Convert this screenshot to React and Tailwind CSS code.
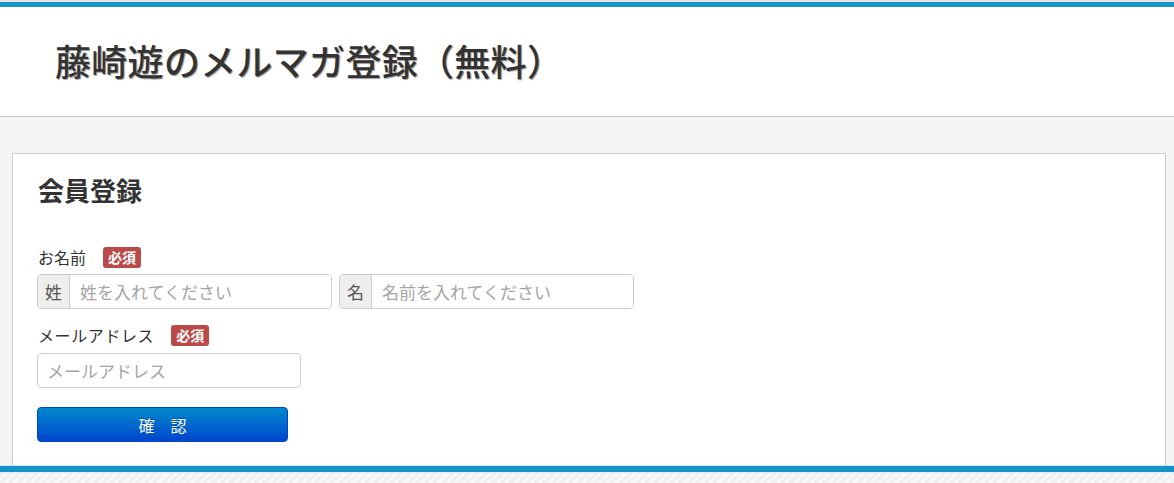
import React from "react";

const jp = { fontFamily: '"Noto Sans CJK JP", "Noto Sans", sans-serif' };

function Badge() {
  return (
    <span className="ml-[17px] inline-flex h-[21px] w-[38px] items-center justify-center rounded-[3px] bg-[#b94a48] text-[14px] font-bold leading-none text-white">
      必須
    </span>
  );
}

function AddonInput({ addon, placeholder }) {
  return (
    <div className="flex h-[35px] w-[295px] overflow-hidden rounded-[4px] border border-[#cccccc] bg-white">
      <div className="flex w-[32px] shrink-0 items-center justify-center border-r border-[#cccccc] bg-[#eeeeee] text-[17px] text-[#555]">
        {addon}
      </div>
      <input
        className="min-w-0 flex-1 bg-white pl-[10px] text-[17px] font-normal text-[#555] outline-none placeholder:text-[#a5a5a5]"
        style={jp}
        placeholder={placeholder}
      />
    </div>
  );
}

export default function App() {
  return (
    <div className="flex h-[483px] flex-col overflow-hidden bg-[#f4f4f4]" style={jp}>
      <div className="h-[2px] bg-[#e4e4e4]" />
      <div className="h-[5px] bg-[#1592c6]" />
      <header className="flex h-[110px] items-center border-b border-[#c8c8c8] bg-white pl-[55px]">
        <h1 className="mt-[-4px] text-[36px] font-medium leading-none tracking-[0.3px] text-[#333] [text-shadow:1px_1px_1px_#9a9a9a]">
          藤崎遊のメルマガ登録（無料）
        </h1>
      </header>
      <main className="min-h-0 flex-1 overflow-hidden pt-[36px]">
        <div className="ml-[12px] mr-[8px] h-[400px] border border-[#cccccc] bg-white pl-[24px] pt-[18px] text-[#333]">
          <h2 className="pl-px text-[26px] font-bold leading-[36px] text-[#333]">会員登録</h2>
          <div className="mt-[38px] flex h-[22px] items-center pl-px">
            <span className="text-[16px] leading-none">お名前</span>
            <Badge />
          </div>
          <div className="mt-[6px] flex gap-[7px]">
            <AddonInput addon="姓" placeholder="姓を入れてください" />
            <AddonInput addon="名" placeholder="名前を入れてください" />
          </div>
          <div className="mt-[15px] flex h-[22px] items-center pl-px">
            <span className="text-[16px] leading-none tracking-[0.6px]">メールアドレス</span>
            <Badge />
          </div>
          <input
            className="mt-[7px] block h-[35px] w-[264px] rounded-[4px] border border-[#cccccc] bg-white pl-[9px] text-[17px] font-normal text-[#555] outline-none placeholder:text-[#a5a5a5]"
            style={jp}
            placeholder="メールアドレス"
          />
          <button
            className="mt-[19px] flex h-[35px] w-[251px] items-center justify-center rounded-[4px] border border-[#0044cc] bg-gradient-to-b from-[#0088cc] to-[#0044cc] text-[16px] text-white [text-shadow:0_-1px_0_rgba(0,0,0,0.25)]"
            style={jp}
          >
            確　認
          </button>
        </div>
      </main>
      <footer className="shrink-0">
        <div className="h-px bg-[#cfe8f4]" />
        <div className="h-[6px] bg-[#1592c6]" />
        <div className="h-px bg-[#dff0f8]" />
        <div className="h-[10px] bg-[repeating-linear-gradient(-45deg,#f0f0f0_0px,#f0f0f0_3px,#f8f8f8_3px,#f8f8f8_6px)]" />
      </footer>
    </div>
  );
}
